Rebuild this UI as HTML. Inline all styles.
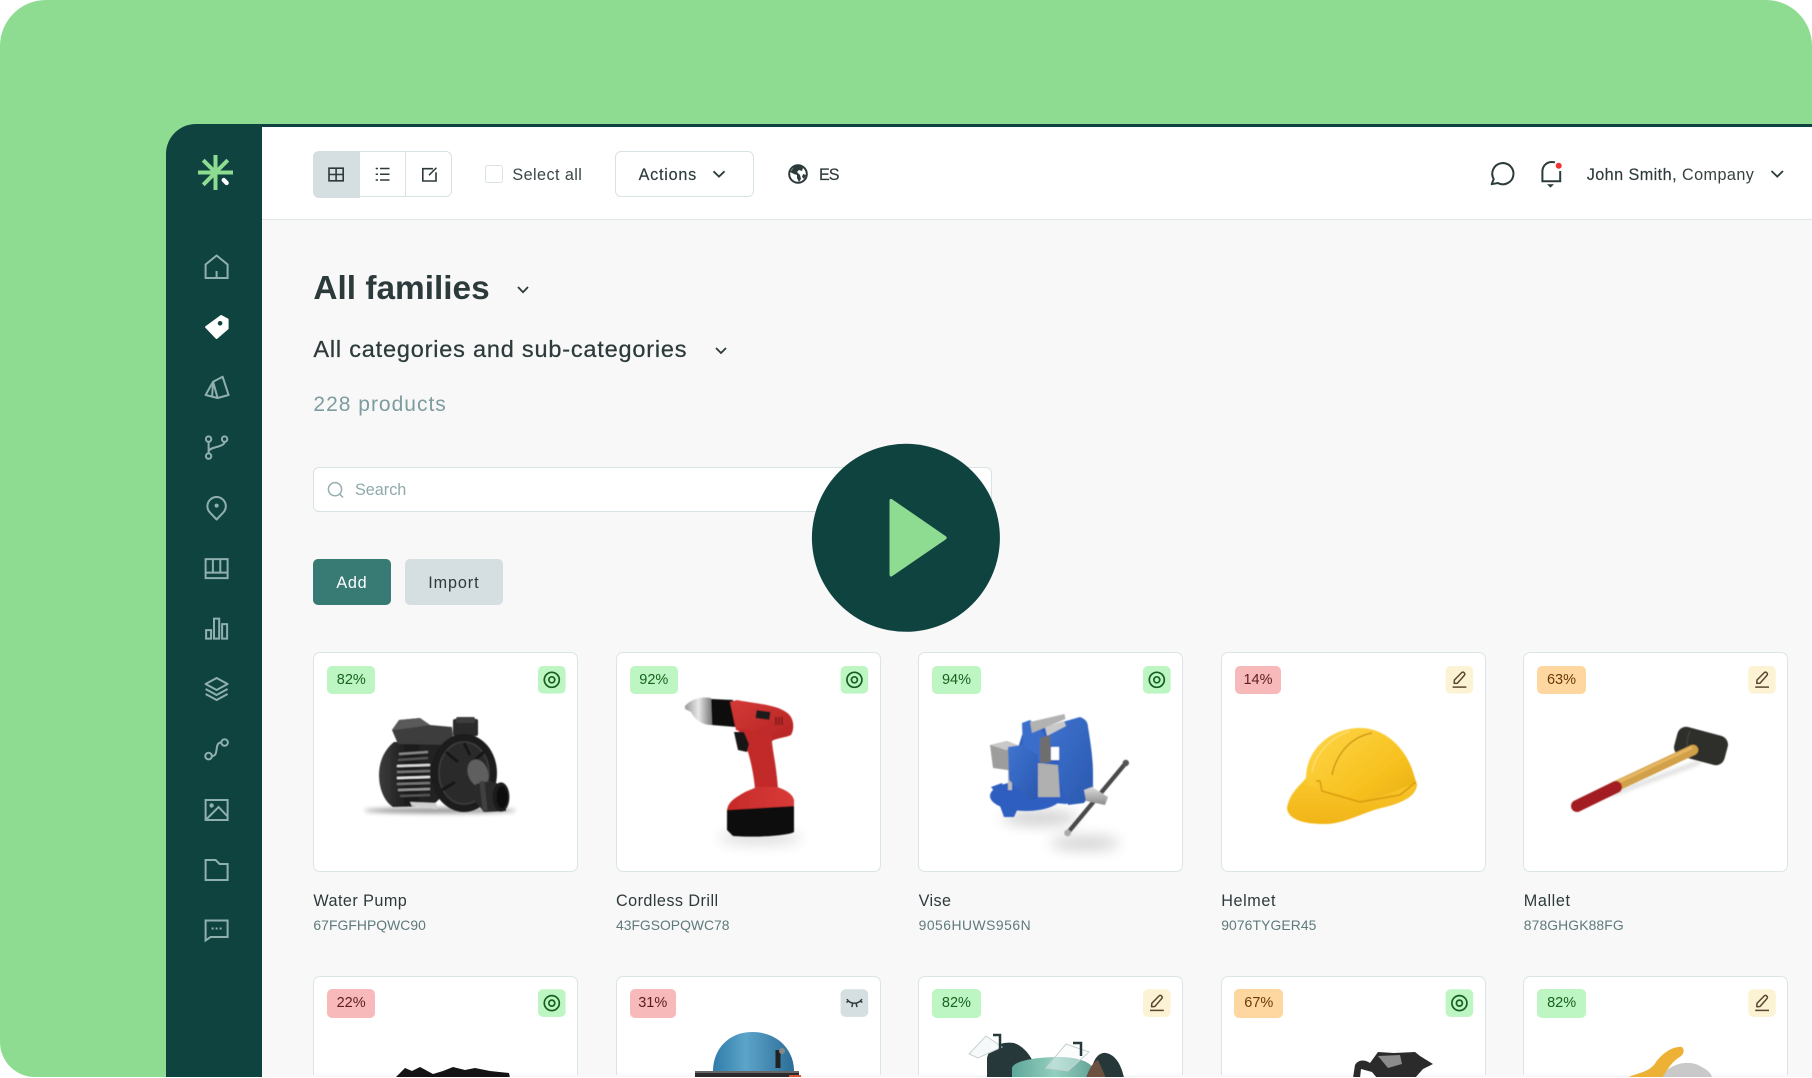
<!DOCTYPE html>
<html lang="en">
<head>
<meta charset="utf-8">
<title>Products</title>
<style>
html,body{margin:0;padding:0;background:#fff;width:1812px;height:1078px;overflow:hidden}
body{font-family:"Liberation Sans",sans-serif;color:#2d3a3b}
#root{position:absolute;left:0;top:0;width:1812px;height:1077px;overflow:hidden;background:#8edc91;border-radius:46px 46px 0 35px}
.a{position:absolute}
.t{position:absolute;white-space:nowrap;line-height:1;font-size:16.2px}
.card{position:absolute;width:263px;height:217.5px;background:#fff;border:1.3px solid #dbe5e6;border-radius:7px}
.card.low{height:98px;border-bottom:0;border-radius:7px 7px 0 0}
.b{position:absolute;height:28.4px;border-radius:5px;display:flex;align-items:center;justify-content:center;font-size:14.5px;line-height:1}
.g{background:#bdf5c3;color:#16631f}
.r{background:#f8b9ba;color:#5e1c1e}
.o{background:#fed69f;color:#6b3a06}
.n{font-size:16.2px}
.s{font-size:13.9px;color:#5f7a7c}
svg{position:absolute;left:0;top:0;overflow:hidden}
</style>
</head>
<body>
<div id="root">
  <div class="a" style="left:262px;top:219px;width:1550px;height:858px;background:#f8f8f8"></div>
  <div class="a" style="left:262px;top:127px;width:1550px;height:91.5px;background:#fff;border-bottom:1.5px solid #dfe6e7"></div>
  <div class="a" style="left:166px;top:124px;width:96px;height:953px;background:#0f4340;border-radius:30px 0 0 0"></div>
  <div class="a" style="left:196px;top:124px;width:1616px;height:3px;background:#0f4340"></div>

  <!-- toolbar -->
  <div class="a" style="left:313px;top:151px;width:136.6px;height:44px;border:1.3px solid #d8e2e4;border-radius:6px;background:#fff"></div>
  <div class="a" style="left:313px;top:151px;width:47px;height:46.6px;background:#d5dee0;border-radius:6px 0 0 6px"></div>
  <div class="a" style="left:405.2px;top:152px;width:1.2px;height:44px;background:#d8e2e4"></div>
  <div class="a" style="left:484.6px;top:164.8px;width:16px;height:16px;border:1.3px solid #d8e2e4;border-radius:3px;background:#fff"></div>
  <div class="t" style="left:512.4px;top:166.7px;letter-spacing:.42px;color:#3a4647">Select all</div>
  <div class="a" style="left:615.4px;top:151px;width:136.6px;height:44px;border:1.3px solid #d8e2e4;border-radius:6px;background:#fff"></div>
  <div class="t" style="left:638.6px;top:166.7px;letter-spacing:.75px;-webkit-text-stroke:.15px #2d3a3b">Actions</div>
  <div class="t" style="left:819px;top:166.7px;letter-spacing:-1px;-webkit-text-stroke:.15px #2d3a3b">ES</div>
  <div class="t" style="left:1586.7px;top:166.8px;letter-spacing:.44px"><span style="-webkit-text-stroke:.15px #2d3a3b">John Smith,</span> <span style="color:#36423f">Company</span></div>

  <!-- headings -->
  <div class="t" style="left:313.4px;top:272.2px;font-size:33.4px;font-weight:700">All families</div>
  <div class="t" style="left:313.4px;top:338.4px;font-size:23.5px;letter-spacing:.8px;-webkit-text-stroke:.25px #2d3a3b">All categories and sub-categories</div>
  <div class="t" style="left:313.4px;top:393.9px;font-size:21px;letter-spacing:1px;color:#7d9c9f">228 products</div>

  <!-- search -->
  <div class="a" style="left:313px;top:466.7px;width:677px;height:43.8px;background:#fff;border:1.3px solid #d8e2e4;border-radius:6px"></div>
  <div class="t" style="left:355px;top:481.9px;color:#8fa9ab">Search</div>

  <!-- buttons -->
  <div class="a" style="left:313px;top:559px;width:78px;height:46.3px;background:#387a74;border-radius:5px"></div>
  <div class="t" style="left:336.4px;top:575.3px;color:#fff;letter-spacing:.7px">Add</div>
  <div class="a" style="left:405px;top:559px;width:98.4px;height:46.3px;background:#d5dee0;border-radius:5px"></div>
  <div class="t" style="left:428.2px;top:575.3px;letter-spacing:.9px">Import</div>

  <!-- row 1 -->
  <div class="card" style="left:313px;top:652px"></div>
  <div class="card" style="left:615.6px;top:652px"></div>
  <div class="card" style="left:918.2px;top:652px"></div>
  <div class="card" style="left:1220.8px;top:652px"></div>
  <div class="card" style="left:1523.4px;top:652px"></div>

  <div class="t n" style="left:313.4px;top:893.3px;letter-spacing:.45px">Water Pump</div>
  <div class="t s" style="left:313.4px;top:918.6px;letter-spacing:.05px">67FGFHPQWC90</div>
  <div class="t n" style="left:616px;top:893.3px;letter-spacing:.45px">Cordless Drill</div>
  <div class="t s" style="left:616px;top:918.6px">43FGSOPQWC78</div>
  <div class="t n" style="left:918.6px;top:893.3px;letter-spacing:.4px">Vise</div>
  <div class="t s" style="left:918.6px;top:918.6px;letter-spacing:.5px">9056HUWS956N</div>
  <div class="t n" style="left:1221.2px;top:893.3px;letter-spacing:.6px">Helmet</div>
  <div class="t s" style="left:1221.2px;top:918.6px;letter-spacing:.1px">9076TYGER45</div>
  <div class="t n" style="left:1523.8px;top:893.3px;letter-spacing:.6px">Mallet</div>
  <div class="t s" style="left:1523.8px;top:918.6px;letter-spacing:.1px">878GHGK88FG</div>

  <div class="b g" style="left:327.2px;top:666px;width:48.2px">82%</div>
  <div class="b g" style="left:629.6px;top:666px;width:48.4px">92%</div>
  <div class="b g" style="left:932.2px;top:666px;width:48.6px">94%</div>
  <div class="b r" style="left:1234.8px;top:666px;width:46.4px">14%</div>
  <div class="b o" style="left:1537.3px;top:666px;width:48.4px">63%</div>

  <!-- row 2 -->
  <div class="card low" style="left:313px;top:975.5px"></div>
  <div class="card low" style="left:615.6px;top:975.5px"></div>
  <div class="card low" style="left:918.2px;top:975.5px"></div>
  <div class="card low" style="left:1220.8px;top:975.5px"></div>
  <div class="card low" style="left:1523.4px;top:975.5px"></div>

  <div class="b r" style="left:327px;top:989.3px;width:48.2px">22%</div>
  <div class="b r" style="left:629.5px;top:989.3px;width:46.5px">31%</div>
  <div class="b g" style="left:932px;top:989.3px;width:48.8px">82%</div>
  <div class="b o" style="left:1234.4px;top:989.3px;width:48.8px">67%</div>
  <div class="b g" style="left:1537.4px;top:989.3px;width:48.4px">82%</div>

  <svg width="1812" height="1077" viewBox="0 0 1812 1077" xmlns="http://www.w3.org/2000/svg">
    <defs>
      <filter id="bl1" x="-30%" y="-30%" width="160%" height="160%"><feGaussianBlur stdDeviation=".6"/></filter>
      <filter id="bl2" x="-50%" y="-200%" width="200%" height="500%"><feGaussianBlur stdDeviation="2.5"/></filter>
      <filter id="bl6" x="-50%" y="-100%" width="200%" height="300%"><feGaussianBlur stdDeviation="7"/></filter>
      <linearGradient id="hy" x1="0" y1="0" x2="1" y2="1"><stop offset="0" stop-color="#ffd94e"/><stop offset=".6" stop-color="#f7c11f"/><stop offset="1" stop-color="#e2a50e"/></linearGradient>
      <linearGradient id="hb" x1="0" y1="0" x2="0" y2="1"><stop offset="0" stop-color="#f9c82c"/><stop offset="1" stop-color="#f1b417"/></linearGradient>
      <linearGradient id="red" x1="0" y1="0" x2="1" y2="1"><stop offset="0" stop-color="#d43a36"/><stop offset="1" stop-color="#b52324"/></linearGradient>
      <linearGradient id="bat" x1="0" y1="0" x2="1" y2="0"><stop offset="0" stop-color="#c62a2a"/><stop offset="1" stop-color="#d83b38"/></linearGradient>
      <linearGradient id="blu" x1="0" y1="0" x2="1" y2="1"><stop offset="0" stop-color="#3f74cf"/><stop offset="1" stop-color="#2a58b0"/></linearGradient>
      <linearGradient id="sil" x1="0" y1="0" x2="0" y2="1"><stop offset="0" stop-color="#dcdcdc"/><stop offset="1" stop-color="#8b8b8b"/></linearGradient>
      <linearGradient id="chk" x1="0" y1="0" x2="1" y2="0"><stop offset="0" stop-color="#999"/><stop offset=".5" stop-color="#e8e8e8"/><stop offset="1" stop-color="#777"/></linearGradient>
      <linearGradient id="teal" x1="0" y1="0" x2="1" y2="0"><stop offset="0" stop-color="#5fa79a"/><stop offset=".5" stop-color="#93cfbf"/><stop offset="1" stop-color="#5d9e92"/></linearGradient>
      <linearGradient id="bh" x1="0" y1="0" x2="1" y2="0"><stop offset="0" stop-color="#2f7caa"/><stop offset=".4" stop-color="#5ca4c9"/><stop offset="1" stop-color="#2b6d98"/></linearGradient>
      <linearGradient id="motor" x1="0" y1="0" x2="1" y2="0"><stop offset="0" stop-color="#3c3c3c"/><stop offset=".3" stop-color="#1d1d1d"/><stop offset="1" stop-color="#2a2a2a"/></linearGradient>
      <symbol id="eye" viewBox="-14 -14 28 28" overflow="visible"><circle r="7.5" fill="none" stroke="currentColor" stroke-width="1.7"/><circle r="3" fill="none" stroke="currentColor" stroke-width="1.7"/></symbol>
      <symbol id="pen" viewBox="-14 -14 28 28" overflow="visible"><path d="M-5.2 3.6 L-5 .2 L2.3 -7.2 A1.6 1.6 0 0 1 4.6 -7.2 L4.9 -6.9 A1.6 1.6 0 0 1 5 -4.6 L-2 3.4 Z" fill="none" stroke="currentColor" stroke-width="1.5" stroke-linejoin="round"/><path d="M-6.8 7.3 H7" stroke="currentColor" stroke-width="1.5"/></symbol>
    </defs>

    <!-- logo -->
    <g fill="none" stroke="#8edc91" stroke-width="4">
      <path d="M215.5 155V190M198 172.5H233M203.2 160.2L215.5 172.5M227.8 160.2L203.2 184.8"/>
    </g>
    <rect x="-4.2" y="-2.2" width="8.4" height="4.4" rx="2.2" fill="#fff" transform="translate(225.2 181.5) rotate(45)"/>

    <!-- sidebar icons -->
    <g fill="none" stroke="#8fb0ae" stroke-width="2">
      <g transform="translate(216.6 267)"><path d="M-11 11V-2.5L0-11.5L11-2.5V11ZM0 11V4"/></g>
      <g transform="translate(216.6 387)"><path d="M-3.5-5.3L6-10.3L12 8L1 11ZM-3.5-5.3L-11 8L1 11M-3.5-5.3L-4.5 9.5" stroke-linejoin="round"/></g>
      <g transform="translate(216.6 447.6)"><circle cx="-8" cy="-8.5" r="2.7"/><circle cx="8" cy="-8.5" r="2.7"/><circle cx="-8" cy="8.5" r="2.7"/><path d="M-8-5.8V5.8M8-5.8C8 0 -8-1-8 4"/></g>
      <g transform="translate(216.6 508)"><path d="M0 11.5L-6.6 4.6A9.2 9.2 0 1 1 6.6 4.6Z" stroke-linejoin="round"/><circle cx="0" cy="-2.4" r="2" fill="#8fb0ae" stroke="none"/></g>
      <g transform="translate(216.6 568.6)"><path d="M-11-9.5H11V9.5H-11ZM-11 4H11M-3.7-9.5V4M3.7-9.5V4"/></g>
      <g transform="translate(216.6 628.6)"><path d="M-10.5 1.5H-5.5V10H-10.5ZM-2.6-10H2.6V10H-2.6ZM5.5-4.5H10.5V10H5.5Z"/></g>
      <g transform="translate(216.6 689)"><path d="M0-11L11-5L0 1L-11-5ZM-11 0L0 6L11 0M-11 5L0 11L11 5" stroke-linejoin="round"/></g>
      <g transform="translate(216.6 749.3)"><circle cx="-8" cy="6.8" r="3.3"/><circle cx="8" cy="-6.8" r="3.3"/><path d="M-4.7 6.8C3 6.8 -3-6.8 4.7-6.8"/></g>
      <g transform="translate(216.6 810)"><path d="M-11-10H11V10H-11ZM-10.5 9.5L2-3L10.5 6"/><circle cx="-5" cy="-4.5" r="2.2" fill="#8fb0ae" stroke="none"/></g>
      <g transform="translate(216.6 870)"><path d="M-11-10H-1L3-6H11V10H-11Z"/></g>
      <g transform="translate(216.6 930)"><path d="M-11-9.5H11V7H-6L-11 10.5Z"/><path d="M-5-1.5H-3M-1-1.5H1M3-1.5H5"/></g>
    </g>
    <!-- active tag -->
    <g transform="translate(216.6 327)">
      <path d="M-10.5 0L4.5-11L11-7.5V1.5L0 11Z" fill="#fff" stroke="#fff" stroke-width="2" stroke-linejoin="round"/>
      <circle cx="3.5" cy="-3.7" r="2.3" fill="#0f4340"/>
    </g>

    <!-- toolbar icons -->
    <g fill="none" stroke="#2d3a3b" stroke-width="1.5">
      <path d="M329 168.2H343.2V180.8H329ZM336.1 168.2V180.8M329 174.5H343.2" stroke-width="1.6"/>
      <path d="M380 168.5H389.5M380 174.2H389.5M380 180H389.5"/>
      <path d="M375.7 168.5H378M375.7 174.2H378M375.7 180H378"/>
      <path d="M433 168.7H422.8V181H436V172.2" stroke-width="1.6"/>
      <path d="M429 175.2L436.4 167.8" stroke-width="1.5"/>
      <path d="M713.5 171.3L719 176.6L724.5 171.3" stroke-width="1.8"/>
      <path d="M1771.5 171L1777.3 176.6L1783 171" stroke-width="1.8"/>
      <path d="M518 287L523 292.2L528 287" stroke-width="1.8"/>
      <path d="M716 348L721 353L726 348" stroke-width="1.8"/>
    </g>
    <!-- globe -->
    <g transform="translate(798 174)">
      <circle r="8.8" fill="none" stroke="#2d3a3b" stroke-width="2"/>
      <path d="M-4-8C-5-5-7-3-8-2L-4 0L-1 1L-1 4L1 8L3 5L2 1L-1-2L1-4L4-3L5-6L1-9Z" fill="#2d3a3b"/>
      <path d="M5 0L8 1L6 5L4 3Z" fill="#2d3a3b"/>
    </g>
    <!-- header right -->
    <g fill="none" stroke="#2d3a3b" stroke-width="2" transform="translate(-1 0)">
      <path d="M1492.7 184.2L1494.7 179A10.6 10.6 0 1 1 1498.8 183Z" stroke-linejoin="round"/>
      <path d="M1542.4 181.3H1561.2V171M1543.4 181.3V171.5C1543.4 166 1547.5 162 1553 162C1554.2 162 1555.3 162.2 1556 162.5"/>
      <path d="M1548 184.2H1555L1551.5 187.6Z" fill="#2d3a3b" stroke="none"/>
      <circle cx="1559.7" cy="165.7" r="3" fill="#f03232" stroke="none"/>
    </g>

    <!-- search icon -->
    <g fill="none" stroke="#97aeb1" stroke-width="1.5"><circle cx="335" cy="489.2" r="6.6"/><path d="M339.8 494.2L343 497.5"/></g>

    <!-- action tiles row 1 -->
    <rect x="538" y="666" width="27.6" height="27.6" rx="5" fill="#bdf5c3"/>
    <rect x="840.6" y="666" width="27.6" height="27.6" rx="5" fill="#bdf5c3"/>
    <rect x="1143" y="666" width="27.6" height="27.6" rx="5" fill="#bdf5c3"/>
    <rect x="1445.6" y="666" width="27.6" height="27.6" rx="5" fill="#fbf3d3"/>
    <rect x="1748.2" y="666" width="27.6" height="27.6" rx="5" fill="#fbf3d3"/>
    <use href="#eye" x="537.8" y="665.8" width="28" height="28" color="#15601f"/>
    <use href="#eye" x="840.4" y="665.8" width="28" height="28" color="#15601f"/>
    <use href="#eye" x="1142.8" y="665.8" width="28" height="28" color="#15601f"/>
    <use href="#pen" x="1445.4" y="665.8" width="28" height="28" color="#5a4630"/>
    <use href="#pen" x="1748" y="665.8" width="28" height="28" color="#5a4630"/>

    <!-- action tiles row 2 -->
    <rect x="538" y="989.3" width="27.6" height="27.6" rx="5" fill="#bdf5c3"/>
    <rect x="840.6" y="989.3" width="27.6" height="27.6" rx="5" fill="#d5dee0"/>
    <rect x="1143" y="989.3" width="27.6" height="27.6" rx="5" fill="#fbf3d3"/>
    <rect x="1445.6" y="989.3" width="27.6" height="27.6" rx="5" fill="#bdf5c3"/>
    <rect x="1748.2" y="989.3" width="27.6" height="27.6" rx="5" fill="#fbf3d3"/>
    <use href="#eye" x="537.8" y="989.1" width="28" height="28" color="#15601f"/>
    <g transform="translate(854.4 1003.1)" fill="none" stroke="#2d3a3b" stroke-width="1.5">
      <path d="M-7.5-4C-4 1.5 4 1.5 7.5-4M-8-.8L-5.3-2.2M8-.8L5.3-2.2M-2.6 4L-1.8.8M2.6 4L1.8.8"/>
    </g>
    <use href="#pen" x="1142.8" y="989.1" width="28" height="28" color="#5a4630"/>
    <use href="#eye" x="1445.4" y="989.1" width="28" height="28" color="#15601f"/>
    <use href="#pen" x="1748" y="989.1" width="28" height="28" color="#5a4630"/>

    <!-- water pump -->
    <ellipse cx="440" cy="810.5" rx="76" ry="3" fill="#000" opacity=".4" filter="url(#bl2)"/>
    <g filter="url(#bl1)">
      <path d="M394 742C384 750 379 762 379 775C379 790 385 802 393 807L432 806L470 770L440 742Z" fill="url(#motor)"/>
      <g stroke-width="2.2">
        <path d="M399 754L428 752" stroke="#888"/><path d="M398 760L428 758" stroke="#555"/>
        <path d="M397 766L430 765" stroke="#dcdcdc"/><path d="M397 772L430 771" stroke="#777"/>
        <path d="M397 778L430 777" stroke="#e8e8e8"/><path d="M397 784L430 783" stroke="#777"/>
        <path d="M398 790L430 789" stroke="#999"/><path d="M400 796L430 795" stroke="#555"/>
      </g>
      <path d="M410 802L436 803L438 809L412 806Z" fill="#cfcfcf"/>
      <path d="M392 730L399 720L420 718L430 725L452 727L454 745L398 744Z" fill="#3c3c3c"/>
      <path d="M392 730L399 720L420 718L430 725L402 729Z" fill="#5a5a5a"/>
      <rect x="453" y="719" width="25" height="17" rx="2" fill="#2a2a2a"/>
      <rect x="456" y="717" width="19" height="6" rx="2" fill="#3d3d3d"/>
      <ellipse cx="464" cy="773" rx="33" ry="39" fill="#1f1f1f"/>
      <ellipse cx="464" cy="773" rx="25" ry="31" fill="#2c2c2c" stroke="#3e3e3e" stroke-width="1.5"/>
      <path d="M464 743L470 755M446 752L458 762M484 752L472 762M442 790L455 782" stroke="#161616" stroke-width="3"/>
      <ellipse cx="478" cy="773" rx="10" ry="14" fill="#5e5e5e" transform="rotate(-20 478 773)"/>
      <path d="M476 784L490 781L505 786L506 811L484 812L474 800Z" fill="#2b2b2b"/>
      <rect x="481" y="781" width="5" height="30" fill="#3f3f3f" transform="rotate(-6 484 796)"/>
      <ellipse cx="501" cy="797" rx="8.4" ry="14.6" fill="#1c1c1c"/>
      <ellipse cx="502" cy="797" rx="5.5" ry="11" fill="#0b0b0b"/>
    </g>

    <!-- cordless drill -->
    <ellipse cx="760" cy="838" rx="42" ry="6" fill="#000" opacity=".15" filter="url(#bl6)"/>
    <g filter="url(#bl1)">
      <path d="M685 706C690 700 700 696 711 698L712 725C702 725 695 720 691 712L685 709Z" fill="url(#chk)"/>
      <path d="M711 699L733 700L736 727L712 725Z" fill="#111"/>
      <path d="M730 702L737 700C750 703 775 704 786 712C794 717 795 728 791 735C785 738 776 738 772 741L736 730Z" fill="url(#red)"/>
      <path d="M738 728L772 736C771 746 776 760 778 789H755C754 776 751 762 748 752L741 740Z" fill="#c22a2a"/>
      <path d="M734 732H744L749 744L747 752L738 750Z" fill="#141414"/>
      <rect x="756" y="711" width="14" height="8" fill="#1a1a1a" transform="rotate(8 763 715)"/>
      <path d="M776 717V725M779 717V725M782 717V725" stroke="#7b1515" stroke-width="1.5"/>
      <path d="M727 812C727 802 735 798 745 792L757 787L777 787C787 790 793 795 794 800V813Z" fill="url(#bat)"/>
      <path d="M727 810L794 806V832C790 835 760 838 733 836L727 830Z" fill="#0e0e0e"/>
    </g>

    <!-- vise -->
    <ellipse cx="1085" cy="843" rx="35" ry="7" fill="#000" opacity=".18" filter="url(#bl6)"/>
    <ellipse cx="1040" cy="818" rx="38" ry="7" fill="#000" opacity=".2" filter="url(#bl6)"/>
    <g filter="url(#bl1)">
      <path d="M990 745L1007 741L1022 747V772L993 768Z" fill="#9d9d9d"/>
      <path d="M990 745L1007 741L1022 747L1006 750Z" fill="#c8c8c8"/>
      <ellipse cx="1026" cy="796" rx="36" ry="15" fill="#2f5fc0"/>
      <path d="M991 787L1002 783L1008 800L998 796ZM1000 806L1019 806L1014 817L1004 817Z" fill="#2f5fc0"/>
      <rect x="1008" y="770" width="4" height="20" fill="#bbb"/>
      <path d="M1022 735L1050 725L1088 745L1092 790L1066 804L1030 801L1009 778Z" fill="#2f5fc0"/>
      <path d="M1022 723L1030 720L1044 733L1046 765L1023 752Z" fill="#3a6ecb"/>
      <path d="M1008 747L1022 745L1038 755V798L1030 801L1009 780Z" fill="url(#blu)"/>
      <path d="M1030 722L1064.5 714L1065.5 719L1032 733Z" fill="#b2b2b2"/>
      <path d="M1045 727L1080 717C1086 719 1088 723 1088 727C1091 745 1093 760 1093 773V790L1084 803L1068 805L1059 780V753L1051 745Z" fill="url(#blu)"/>
      <path d="M1045 727L1064 721L1066 726L1047 736Z" fill="#c9c9c9"/>
      <path d="M1040 738L1050 735L1051 762L1040 763Z" fill="#6e6e6e"/>
      <path d="M1051 747H1059V760H1051Z" fill="#fff"/>
      <path d="M1038 763L1058 765L1060 797L1038 797Z" fill="#b0b0b0"/>
      <path d="M1067.6 833L1125.8 763" stroke="#4a4a4a" stroke-width="4.4" stroke-linecap="round"/>
      <circle cx="1067.6" cy="833" r="3.4" fill="#aaa"/>
      <circle cx="1125.8" cy="763" r="3.2" fill="#555"/>
      <path d="M1084 790L1092 787L1108 797L1105 805L1086 801Z" fill="url(#sil)"/>
    </g>

    <!-- helmet -->
    <g filter="url(#bl1)">
      <path d="M1287 808C1290 792 1300 786 1306 778C1306 750 1330 728 1360 728C1390 728 1408 755 1413 772L1417 785C1415 798 1400 803 1385 807C1365 811 1345 824 1325 824C1305 824 1288 820 1287 808Z" fill="url(#hy)"/>
      <path d="M1287 808C1290 792 1300 786 1306 778L1310 786L1360 804L1416 783C1415 798 1400 803 1385 807C1365 811 1345 824 1325 824C1305 824 1288 820 1287 808Z" fill="url(#hb)"/>
      <path d="M1332 775C1336 755 1350 737 1372 733" fill="none" stroke="#c88e0e" stroke-width="1.3"/>
      <path d="M1312 772C1315 755 1330 737 1350 731" fill="none" stroke="#ffe27a" stroke-width="1"/>
      <path d="M1316 781L1320 781L1322 791L1360 802L1400 795L1416 782" fill="none" stroke="#d9980e" stroke-width="1.5"/>
    </g>

    <!-- mallet -->
    <path d="M1610 795L1700 762" stroke="#000" stroke-width="3" opacity=".2" filter="url(#bl2)"/>
    <g filter="url(#bl1)">
      <rect x="1675" y="731" width="52" height="30" rx="9" fill="#2e2e2c" transform="rotate(15 1701 746)"/>
      <path d="M1690 731C1687 737 1686 746 1688 754" fill="none" stroke="#444" stroke-width="1.2"/>
      <path d="M1612 788L1693 750" stroke="#d1a04a" stroke-width="10.5" stroke-linecap="round"/>
      <path d="M1614 784L1692 747.5" stroke="#e6b660" stroke-width="3"/>
      <path d="M1577 806L1616 787" stroke="#a21f24" stroke-width="12" stroke-linecap="round"/>
    </g>

    <!-- row 2 products -->
    <path d="M395 1078L405 1068L412 1071L420 1067L433 1074L443 1071L453 1067L465 1070L475 1068L490 1071L509 1073L510 1078Z" fill="#141414"/>

    <path d="M713 1071C713 1050 728 1032 752 1032C778 1032 794 1050 794 1071Z" fill="url(#bh)"/>
    <rect x="695" y="1071" width="104" height="7" fill="#2b2b2b"/>
    <rect x="695" y="1071" width="104" height="2" fill="#666"/>
    <path d="M778 1050V1068" stroke="#222" stroke-width="5"/>
    <circle cx="782" cy="1051" r="3" fill="#888"/>
    <rect x="789" y="1075" width="12" height="4" fill="#d8563c"/>

    <path d="M987 1078V1058C989 1048 1000 1041 1014 1043C1028 1048 1036 1064 1038 1078Z" fill="#27383a"/>
    <path d="M1090 1078C1092 1060 1098 1052 1106 1053C1117 1055 1122 1068 1124 1078Z" fill="#27383a"/>
    <path d="M1012 1078V1068C1014 1060 1040 1057 1058 1057C1080 1057 1095 1062 1098 1078Z" fill="url(#teal)"/>
    <path d="M1086 1078C1090 1066 1094 1062 1098 1060L1106 1078Z" fill="#6d5140"/>
    <path d="M969 1054L986 1036L1002 1047L978 1058Z" fill="#f6f9f9" stroke="#c7d0d0" stroke-width="1"/>
    <path d="M1046 1068L1066 1044L1089 1052L1068 1071Z" fill="#f6f9f9" fill-opacity=".4" stroke="#c7d0d0" stroke-width="1"/>
    <path d="M993 1035H1000V1050" fill="none" stroke="#27383a" stroke-width="2.5"/>
    <path d="M1073 1043H1081V1056" fill="none" stroke="#27383a" stroke-width="2.5"/>

    <path d="M1353 1078L1355 1065C1358 1060 1364 1059 1370 1063L1378 1052L1394 1053L1415 1052L1420 1056L1433 1064L1423 1069L1415 1078Z" fill="#2b2b2b"/>
    <path d="M1378 1056L1400 1055L1402 1064L1388 1068Z" fill="#8c8c8c"/>
    <path d="M1360 1078L1361 1069L1372 1072L1377 1078Z" fill="#fff"/>

    <path d="M1660 1078C1670 1062 1690 1060 1700 1066C1708 1070 1712 1074 1712 1078Z" fill="#c9c9c9"/>
    <path d="M1626 1078C1640 1072 1650 1072 1656 1062C1662 1054 1672 1046 1682 1047C1685 1050 1684 1055 1678 1058C1670 1064 1666 1072 1662 1078Z" fill="#edb136"/>

    <!-- play -->
    <circle cx="905.9" cy="537.8" r="94" fill="#0f4340"/>
    <path d="M891.6 499.5L945.5 536.6Q947 537.8 945.5 539L891.6 575.9Q890 576.5 890 574.5V501Q890 498.8 891.6 499.5Z" fill="#8edc91" stroke="#8edc91" stroke-width="1"/>
  </svg>
</div>
</body>
</html>
